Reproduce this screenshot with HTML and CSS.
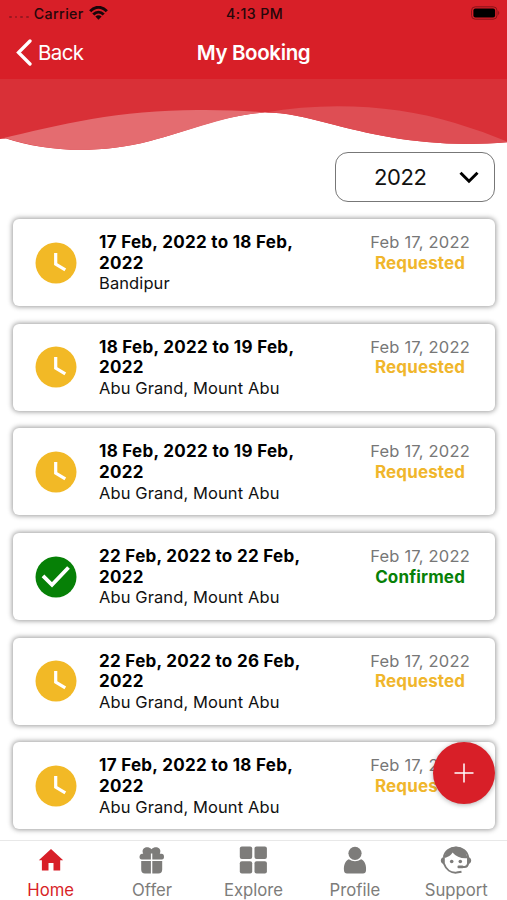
FILE: index.html
```html
<!DOCTYPE html>
<html lang="en">
<head>
<meta charset="utf-8">
<title>My Booking</title>
<link rel="stylesheet" href="styles.css">
</head>
<body>
<svg class="defs" aria-hidden="true">
  <symbol id="clock" viewBox="0 0 42 42"><circle cx="21" cy="21" r="20.5" fill="#f2b926"/><path d="M20.7 11v11l9.6 5.9" fill="none" stroke="#fff" stroke-width="3.2"/></symbol>
  <symbol id="check" viewBox="0 0 42 42"><circle cx="21" cy="21" r="20.5" fill="#068006"/><path d="M8 19.8l9 9L33.5 11.5" fill="none" stroke="#fff" stroke-width="3.8"/></symbol>
</svg>
<div class="app">
  <header class="header">
    <div class="status">
      <div class="carrier">
        <span class="dots"><i></i><i></i><i></i><i></i></span>
        <span class="carrier-name">Carrier</span>
        <svg class="wifi" width="19" height="14" viewBox="0 0 19 14"><g fill="none" stroke="#18060a" stroke-width="2.9"><path d="M1.2 5.3C6-.1 13-.1 17.800 5.300"/><path d="M4.300 8.600C7.400 5.300 11.600 5.300 14.700 8.600"/></g><path d="M6.400 10.600q3.100-2.600 6.200 0L9.500 13.800z" fill="#18060a"/></svg>
      </div>
      <div class="time">4:13 PM</div>
      <svg class="battery" width="29" height="14" viewBox="0 0 29 14"><rect x=".5" y=".8" width="25.5" height="12.400" rx="3.800" fill="none" stroke="#881319"/><rect x="2.400" y="2.600" width="21.700" height="8.800" rx="2" fill="#000"/><path d="M27.200 4.800q2.200 2.200 0 4.400z" fill="#881319"/></svg>
    </div>
    <nav class="navbar">
      <div class="back"><svg width="16" height="27" viewBox="0 0 16 27"><path d="M14 2L2.500 13.500 14 25" fill="none" stroke="#fff" stroke-width="3.300" stroke-linecap="round"/></svg><span>Back</span></div>
      <h1>My Booking</h1>
    </nav>
  </header>
  <svg class="waves" width="507" height="74" viewBox="0 79 507 74">
    <path d="M0 79H507V142.300C430 149 370 134 335 125C305 117 285 112.500 265 112.500C220 116 190 131 150 141C95 155 45 151 6 138.500L0 139z" fill="#d93037"/>
    <path d="M0 139C60 124 125 109 205 110Q240 110 265 112.500C225 115 190 131 150 141C95 155 45 151 6 138.200z" fill="#e46c70"/>
    <path d="M265 112.500C330 101 400 106 455 123Q482 131 507 141.500V142.300C430 149 370 134 335 125C305 117 285 112.500 265 112.500z" fill="#de4e54"/>
  </svg>
  <main>
    <div class="year"><span>2022</span><svg width="20" height="13" viewBox="0 0 20 13"><path d="M1.500 1.700L10 10.200L18.500 1.700" fill="none" stroke="#000" stroke-width="3"/></svg></div>
    <section class="list">
      <article class="card"><svg class="icon"><use href="#clock"/></svg><div class="info"><b>17 Feb, 2022 to 18 Feb,<br>2022</b><p>Bandipur</p></div><div class="state"><p>Feb 17, 2022</p><b>Requested</b></div></article>
      <article class="card"><svg class="icon"><use href="#clock"/></svg><div class="info"><b>18 Feb, 2022 to 19 Feb,<br>2022</b><p>Abu Grand, Mount Abu</p></div><div class="state"><p>Feb 17, 2022</p><b>Requested</b></div></article>
      <article class="card"><svg class="icon"><use href="#clock"/></svg><div class="info"><b>18 Feb, 2022 to 19 Feb,<br>2022</b><p>Abu Grand, Mount Abu</p></div><div class="state"><p>Feb 17, 2022</p><b>Requested</b></div></article>
      <article class="card"><svg class="icon"><use href="#check"/></svg><div class="info"><b>22 Feb, 2022 to 22 Feb,<br>2022</b><p>Abu Grand, Mount Abu</p></div><div class="state confirmed"><p>Feb 17, 2022</p><b>Confirmed</b></div></article>
      <article class="card"><svg class="icon"><use href="#clock"/></svg><div class="info"><b>22 Feb, 2022 to 26 Feb,<br>2022</b><p>Abu Grand, Mount Abu</p></div><div class="state"><p>Feb 17, 2022</p><b>Requested</b></div></article>
      <article class="card"><svg class="icon"><use href="#clock"/></svg><div class="info"><b>17 Feb, 2022 to 18 Feb,<br>2022</b><p>Abu Grand, Mount Abu</p></div><div class="state"><p>Feb 17, 2022</p><b>Requested</b></div></article>
    </section>
  </main>
  <button class="fab" aria-label="Add booking"><svg width="20" height="20" viewBox="0 0 20 20"><path d="M10 .5v19M.5 10h19" stroke="#fff" stroke-width="1.500"/></svg></button>
  <footer class="tabs">
    <div class="tab active"><svg width="32" height="32" viewBox="0 0 32 32"><path d="M16 5L28.200 16.200H25.200V26.500H18.500V19H13.500V26.500H6.900V16.200H3.800z" fill="currentColor"/></svg><span>Home</span></div>
    <div class="tab"><svg width="32" height="32" viewBox="0 0 32 32"><g fill="currentColor"><path d="M14.900 15.500H5.800Q3.500 15.500 3.500 12.800T5.800 9.800H7.200C4.500 4 11.500 1.200 15.500 5.200C19.500 1.200 26.500 4 23.800 9.800H25.500Q28 9.800 28 12.800T25.500 15.500H16.300V9.500H14.900z"/><path d="M5.200 17H14.900V29.500H9Q5.200 29.500 5.200 25.500zM16.300 17H26.200V25.500Q26.200 29.500 22.400 29.500H16.300z"/></g></svg><span>Offer</span></div>
    <div class="tab"><svg width="32" height="32" viewBox="0 0 32 32"><g fill="currentColor"><rect x="2.800" y="2.500" width="12.400" height="12.400" rx="2"/><rect x="17.500" y="2.500" width="12.400" height="12.400" rx="2"/><rect x="2.800" y="17.200" width="12.400" height="12.400" rx="2"/><rect x="17.500" y="17.200" width="12.400" height="12.400" rx="2"/></g></svg><span>Explore</span></div>
    <div class="tab"><svg width="32" height="32" viewBox="0 0 32 32"><g fill="currentColor"><circle cx="16" cy="9.300" r="6.600"/><path d="M9.800 15.200Q16 19.500 22.200 15.200C26 16.500 27.500 22 27 26.500Q26.800 29.500 24 29.500H8Q5.200 29.500 5 26.500C4.500 22 6 16.500 9.800 15.200z"/></g></svg><span>Profile</span></div>
    <div class="tab"><svg width="32" height="32" viewBox="0 0 32 32"><path d="M3.900 13C5 7 10 3.400 16 3.400S27 7 28.100 13V19.500Q27.500 22.900 24.500 22.900H19.500M3.900 19.500C6 25.500 11 29 16.500 28.600L21.500 27.700" fill="none" stroke="currentColor" stroke-width="2"/><path d="M4.500 14C9.500 12.500 11.500 10.500 12.500 8.500Q18 15 27.500 14.200C26 6.500 21.500 2.800 16 2.800S5.500 6.500 4.500 14z" fill="currentColor"/><path d="M4.800 12.500V20.500Q.8 19.500 .8 16.500T4.800 12.500zM27.200 12.500V20.500Q31.200 19.500 31.200 16.500T27.200 12.500z" fill="currentColor"/><circle cx="11.700" cy="17.500" r="1.800" fill="currentColor"/><circle cx="20.300" cy="17.500" r="1.800" fill="currentColor"/><rect x="17.500" y="21.500" width="6" height="2.800" rx="1" fill="currentColor"/></svg><span>Support</span></div>
  </footer>
</div>
</body>
</html>
```
FILE: styles.css
```css
* { box-sizing: border-box; margin: 0; padding: 0; }
body { font-family: Inter, "Liberation Sans", sans-serif; background: #fff; color: #111; overflow: hidden; }
.defs { position: absolute; width: 0; height: 0; }
svg { display: block; flex: none; }
.app { position: relative; width: 507px; height: 900px; overflow: hidden; display: flex; flex-direction: column; }
.header { height: 79px; flex: none; background: #d81f28; }
.status { height: 26px; padding: 0 7px 0 9px; display: grid; grid-template-columns: 1fr auto 1fr; align-items: center; font-size: 14.200px; letter-spacing: .4px; font-weight: 500; color: #25070a; }
.carrier { display: flex; align-items: center; }
.dots { display: flex; gap: 3px; margin: 8px 5px 0 0; }
.dots i { width: 2.700px; height: 2.700px; border-radius: 50%; background: #981820; }
.wifi { margin-left: 5px; }
.battery { justify-self: end; }
.navbar { height: 53px; padding: 0 16px; display: grid; grid-template-columns: 1fr auto 1fr; align-items: center; color: #fff; }
.back { display: flex; align-items: center; gap: 6px; font-size: 20.500px; letter-spacing: -.6px; }
.navbar h1 { font-size: 20.500px; font-weight: 600; letter-spacing: -.35px; }
.waves { flex: none; }
main { flex: 1; margin-top: -1px; min-height: 0; display: flex; flex-direction: column; padding: 0 12px; }
.year { flex: none; align-self: flex-end; width: 160px; height: 50px; border: 1px solid #777; border-radius: 13px; display: flex; align-items: center; justify-content: space-between; padding: 0 15px 0 38px; font-size: 22px; letter-spacing: -.4px; }
.list { display: flex; flex-direction: column; gap: 17.700px; padding: 17px 0 0 1px; }
.card { flex: none; height: 87px; width: 482px; display: flex; align-items: flex-start; background: #fff; border-radius: 6px; box-shadow: 0 0 5px 1px rgba(0,0,0,.38); padding: 13px 25px 0 22px; font-size: 16.500px; line-height: 20.700px; letter-spacing: .1px; }
.icon { width: 42px; height: 42px; margin: 9.500px 22px 0 0; }
.info { flex: 1; white-space: nowrap; }
.info b { font-size: 17px; letter-spacing: .3px; font-weight: 700; color: #000; }
.state { text-align: center; color: #777; white-space: nowrap; }
.state p { letter-spacing: .2px; }
.state b { font-size: 17px; letter-spacing: .15px; font-weight: 700; color: #f0b62c; }
.state.confirmed b { color: #078007; }
.fab { position: absolute; left: 433px; top: 742px; width: 62px; height: 62px; border: 0; border-radius: 50%; background: #d81f28; display: flex; align-items: center; justify-content: center; box-shadow: 0 1px 5px rgba(0,0,0,.3); }
.tabs { position: relative; flex: none; height: 60px; border-top: 1px solid #e8e8e8; background: #fff; display: grid; grid-template-columns: repeat(5, 1fr); color: #7d7c7a; }
.tab { display: flex; flex-direction: column; align-items: center; padding-top: 3px; font-size: 16.700px; line-height: 20px; }
.tab span { margin-top: 4px; }
.tab.active { color: #d81f28; }
```
